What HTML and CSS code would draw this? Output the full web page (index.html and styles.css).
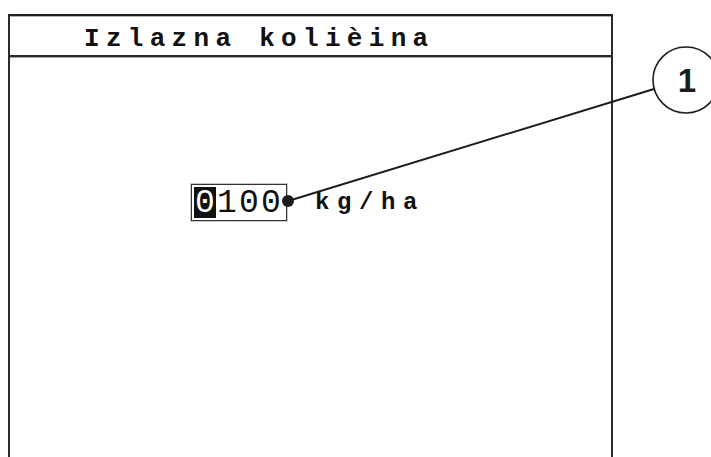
FILE: index.html
```html
<!DOCTYPE html>
<html>
<head>
<meta charset="utf-8">
<link rel="stylesheet" href="styles.css">
</head>
<body>
<div class="screen">
  <div class="header">
    <div class="title">Izlazna kolièina</div>
  </div>
  <div class="content">
    <div class="row">
      <div class="field">
        <span class="cell cursor">0</span><span class="cell">1</span><span class="cell">0</span><span class="cell">0</span>
      </div>
      <span class="unit">kg/ha</span>
    </div>
  </div>
</div>
<svg class="callout" width="711" height="457" viewBox="0 0 711 457">
  <line x1="288" y1="201" x2="654" y2="89" stroke="#1c1c1c" stroke-width="2"/>
  <circle cx="288" cy="201" r="6" fill="#1c1c1c"/>
  <circle cx="686" cy="80" r="33" fill="#fff" stroke="#1c1c1c" stroke-width="1.6"/>
  <text x="687" y="92" text-anchor="middle" class="num">1</text>
</svg>
</body>
</html>
```
FILE: styles.css
```css
html, body {
  margin: 0;
  padding: 0;
  background: #fff;
}
body {
  width: 711px;
  height: 457px;
  overflow: hidden;
  position: relative;
}
.screen {
  box-sizing: border-box;
  margin-left: 8px;
  margin-top: 14px;
  width: 605px;
  height: 443px;
  border-left: 2px solid #2a2a2a;
  border-right: 2px solid #2a2a2a;
  border-top: 2px solid #1f1f1f;
}
.header {
  box-sizing: border-box;
  height: 41px;
  border-top: 1px solid #b0b0b0;
  border-bottom: 2px solid #2a2a2a;
  box-shadow: 0 1px 0 #a8a8a8;
  padding-left: 74px;
  padding-top: 9px;
}
.title {
  font-family: "Liberation Mono", monospace;
  font-weight: bold;
  font-size: 26px;
  line-height: 26px;
  letter-spacing: 6.3px;
  color: #111;
  white-space: pre;
}
.content {
  padding-top: 127px;
  padding-left: 181px;
}
.row {
  display: flex;
  align-items: flex-end;
}
.field {
  box-sizing: border-box;
  display: flex;
  width: 96px;
  height: 37px;
  padding: 2px;
  border: 1px solid #333;
  box-shadow: 0 0 0 1px #c8c8c8;
}
.cell {
  display: block;
  width: 22px;
  height: 31px;
  text-align: center;
  font-family: "Liberation Mono", monospace;
  font-size: 33px;
  line-height: 33px;
  color: #111;
}
.cursor {
  background: #111;
  color: #fff;
}
.unit {
  font-family: "Liberation Mono", monospace;
  font-weight: bold;
  font-size: 24px;
  line-height: 24px;
  letter-spacing: 7.6px;
  color: #111;
  margin-left: 28px;
  margin-bottom: 6px;
}
.callout {
  position: absolute;
  left: 0;
  top: 0;
  pointer-events: none;
}
.num {
  font-family: "Liberation Sans", Arial, sans-serif;
  font-weight: bold;
  font-size: 33px;
  fill: #1c1c1c;
}
```
